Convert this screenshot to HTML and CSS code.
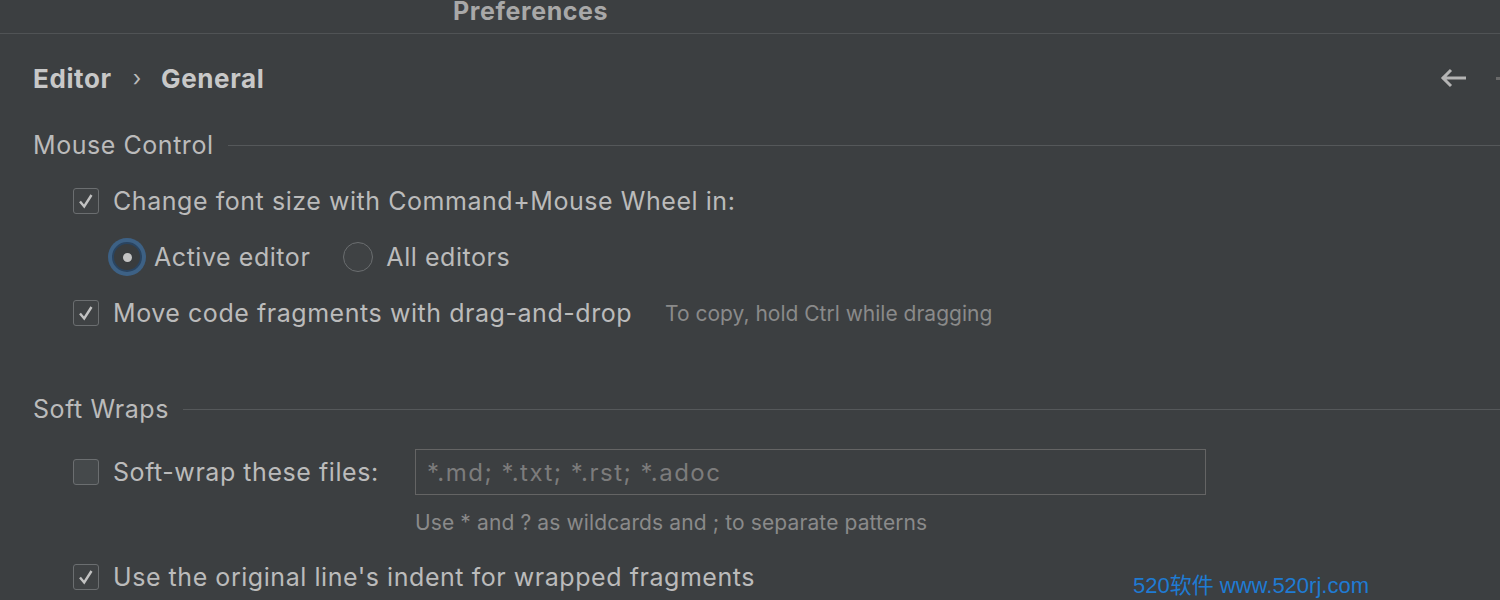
FILE: index.html
```html
<!DOCTYPE html>
<html>
<head>
<meta charset="utf-8">
<link rel="stylesheet" href="styles.css">
</head>
<body>
<div class="titlebar"><span class="title">Preferences</span></div>
<div class="content">
  <div class="crumbs">
    <span class="crumb">Editor</span>
    <span class="chev">›</span>
    <span class="crumb">General</span>
    <span class="spacer"></span>
    <svg class="back" width="28" height="20" viewBox="0 0 28 20"><path d="M2 10 H26 M11 2 L3 10 L11 18" fill="none" stroke="#b4b4b4" stroke-width="3"/></svg>
    <span class="fwd"></span>
  </div>

  <div class="section"><span class="sec-title">Mouse Control</span><span class="rule"></span></div>

  <div class="row ind1 first">
    <span class="cb checked"><svg width="20" height="20" viewBox="0 0 20 20"><path d="M4 10.5 L8.2 15.5 L15.5 4" fill="none" stroke="#c2c2c2" stroke-width="2.4"/></svg></span>
    <span class="label">Change font size with Command+Mouse Wheel in:</span>
  </div>
  <div class="row ind2">
    <span class="radio on"><span class="dot"></span></span>
    <span class="label">Active editor</span>
    <span class="radio off"></span>
    <span class="label">All editors</span>
  </div>
  <div class="row ind1">
    <span class="cb checked"><svg width="20" height="20" viewBox="0 0 20 20"><path d="M4 10.5 L8.2 15.5 L15.5 4" fill="none" stroke="#c2c2c2" stroke-width="2.4"/></svg></span>
    <span class="label">Move code fragments with drag-and-drop</span>
    <span class="hint inline">To copy, hold Ctrl while dragging</span>
  </div>

  <div class="section soft"><span class="sec-title">Soft Wraps</span><span class="rule"></span></div>

  <div class="row ind1 wraprow">
    <span class="cb"></span>
    <span class="label wraplabel">Soft-wrap these files:</span>
    <span class="input">*.md; *.txt; *.rst; *.adoc</span>
  </div>
  <div class="hintrow"><span class="hint wide">Use * and ? as wildcards and ; to separate patterns</span></div>
  <div class="row ind1 last">
    <span class="cb checked"><svg width="20" height="20" viewBox="0 0 20 20"><path d="M4 10.5 L8.2 15.5 L15.5 4" fill="none" stroke="#c2c2c2" stroke-width="2.4"/></svg></span>
    <span class="label">Use the original line's indent for wrapped fragments</span>
  </div>
</div>
<div class="watermark">520软件 www.520rj.com</div>
</body>
</html>
```
FILE: styles.css
```css
html, body {
  margin: 0;
  padding: 0;
  background: #3c3f41;
  width: 1500px;
  height: 600px;
  overflow: hidden;
  font-family: Inter, "Noto Sans", "Liberation Sans", "Noto Sans CJK SC", sans-serif;
  color: #bbbbbb;
}
.titlebar {
  height: 33px;
  border-bottom: 1px solid #505355;
  padding-left: 453px;
  overflow: hidden;
}
.title {
  display: block;
  font-weight: 700;
  font-size: 25px;
  letter-spacing: 0.6px;
  line-height: 26px;
  color: #a8a8a8;
  margin-top: -2px;
}
.content {
  padding-left: 33px;
}
.crumbs {
  display: flex;
  align-items: center;
  height: 56px;
  margin-top: 16px;
}
.crumb {
  font-weight: 700;
  font-size: 26px;
  letter-spacing: 0.6px;
  color: #c8c8c8;
}
.chev {
  font-size: 22px;
  color: #bbbbbb;
  margin: 0 20px 0 21px;
}
.spacer { flex: 1; }
.back { margin-right: 28px; }
.fwd {
  width: 4px;
  height: 3px;
  background: #6a6a6a;
}
.section {
  display: flex;
  align-items: center;
  height: 40px;
  margin-top: 19px;
}
.section.soft { margin-top: 48px; }
.sec-title {
  font-size: 25px;
  letter-spacing: 0.55px;
  color: #bbbbbb;
}
.rule {
  flex: 1;
  height: 1px;
  background: #55585a;
  margin-left: 14px;
}
.row {
  display: flex;
  align-items: center;
  height: 56px;
}
.row.first { margin-top: 8px; }
.ind1 { padding-left: 40px; }
.ind2 { padding-left: 75px; }
.label {
  font-size: 25px;
  letter-spacing: 0.55px;
  color: #bbbbbb;
}
.cb {
  box-sizing: border-box;
  width: 26px;
  height: 26px;
  border: 1.5px solid #6b6e70;
  border-radius: 3px;
  background: #45494b;
  margin-right: 14px;
  display: flex;
  align-items: center;
  justify-content: center;
}
.cb.checked { background: #3f4244; }
.radio {
  box-sizing: border-box;
  width: 30px;
  height: 30px;
  border-radius: 50%;
  display: flex;
  align-items: center;
  justify-content: center;
  margin-right: 12px;
}
.radio.on {
  border: 2px solid #2a4460;
  background: #393c3e;
  box-shadow: 0 0 0 4px #3d6185;
  margin-left: 4px;
  margin-right: 12px;
}
.radio.off {
  border: 1.5px solid #6b6e70;
  background: #3f4244;
  margin-left: 33px;
  margin-right: 13px;
}
.dot {
  width: 9px;
  height: 9px;
  border-radius: 50%;
  background: #c4c4c4;
}
.hint {
  font-size: 21px;
  color: #8a8a8a;
}
.hint.inline { margin-left: 33px; }
.hint.wide { letter-spacing: 0.12px; }
.section.soft + .row { margin-top: 15px; }
.wraplabel { width: 268px; }
.input {
  box-sizing: border-box;
  width: 791px;
  height: 46px;
  border: 1.5px solid #646464;
  margin-left: 34px;
  padding-left: 11px;
  display: flex;
  align-items: center;
  font-size: 24px;
  letter-spacing: 1.5px;
  color: #7c7c7c;
}
.hintrow {
  height: 44px;
  display: flex;
  align-items: center;
  padding-left: 382px;
}
.last { margin-top: 5px; }
.watermark {
  position: absolute;
  left: 1133px;
  top: 567px;
  font-family: "Liberation Sans", "Noto Sans CJK SC", sans-serif;
  font-size: 22px;
  color: #1f7bd3;
}
```
